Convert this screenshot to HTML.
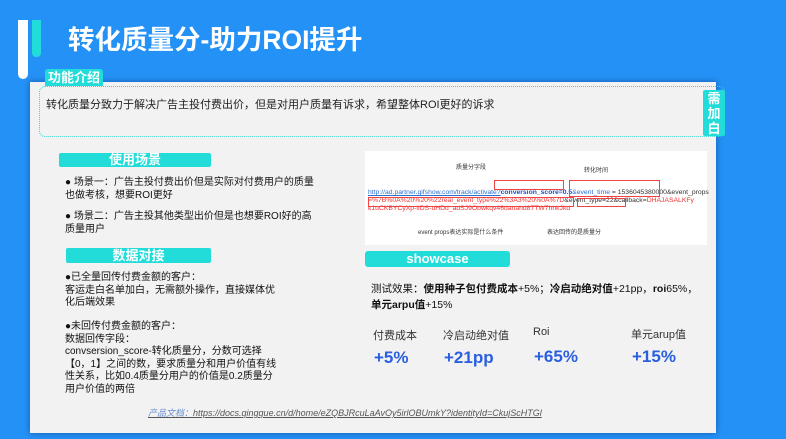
<!DOCTYPE html><html><head><meta charset="utf-8"><style>
*{margin:0;padding:0;box-sizing:border-box}
body{width:786px;height:439px;overflow:hidden;background:#2491f6;font-family:"Liberation Sans","Noto Sans CJK SC",sans-serif;position:relative}
.a{position:absolute}
.tab{position:absolute;background:#22dcd9;color:#fff;font-weight:bold;text-align:center;border-radius:2px}
.t{position:absolute;font-size:10px;color:#111;line-height:13px}
.r{position:absolute;border:1px solid #e44}
</style></head><body>
<div class="a" style="left:18px;top:20px;width:10px;height:59px;background:#fff;border-radius:0 0 5px 5px"></div>
<div class="a" style="left:32px;top:20px;width:9px;height:37px;background:#22dcd9;border-radius:0 0 4px 4px"></div>
<div class="a" style="left:68px;top:18px;font-size:26.5px;font-weight:bold;color:#fff">转化质量分-助力ROI提升</div>
<div class="a" style="left:30px;top:82px;width:686px;height:351px;background:#f2f2f2;box-shadow:0 0 6px rgba(0,0,60,.4)"></div>
<div class="a" style="left:39px;top:86px;width:686px;height:51px;border:1.5px dotted #2ad9d6;border-radius:6px"></div>
<div class="tab" style="left:45px;top:69px;width:58px;height:17px;font-size:13px;line-height:17px;border-radius:3px 3px 0 0">功能介绍</div>
<div class="t" style="left:46px;top:99px;font-size:11px;color:#222">转化质量分致力于解决广告主投付费出价，但是对用户质量有诉求，希望整体ROI更好的诉求</div>
<div class="tab" style="left:703px;top:90px;width:22px;height:46px;font-size:13px;line-height:15px;padding-top:1px">需<br>加<br>白</div>
<div class="tab" style="left:59px;top:153px;width:152px;height:14px;font-size:13px;line-height:14px">使用场景</div>
<div class="t" style="left:65px;top:176px">● 场景一：广告主投付费出价但是实际对付费用户的质量<br>也做考核，想要ROI更好</div>
<div class="t" style="left:65px;top:210px">● 场景二：广告主投其他类型出价但是也想要ROI好的高<br>质量用户</div>
<div class="tab" style="left:66px;top:248px;width:145px;height:15px;font-size:13px;line-height:15px">数据对接</div>
<div class="t" style="left:65px;top:272px;line-height:12.5px">●已全量回传付费金额的客户：<br>客运走白名单加白，无需额外操作，直接媒体优<br>化后端效果</div>
<div class="t" style="left:65px;top:321px;line-height:12.5px">●未回传付费金额的客户：<br>数据回传字段：<br>convsersion_score-转化质量分，分数可选择<br>【0，1】之间的数，要求质量分和用户价值有线<br>性关系，比如0.4质量分用户的价值是0.2质量分<br>用户价值的两倍</div>
<div class="a" style="left:148px;top:406px;font-size:9px;color:#555;font-style:italic;text-decoration:underline"><span style="color:#6a8fd0">产品文档：</span>https://docs.qingque.cn/d/home/eZQBJRcuLaAvOy5irlOBUmkY?identityId=CkujScHTGl</div>
<div class="a" style="left:365px;top:151px;width:342px;height:94px;background:#fff"></div>
<div class="a" style="left:456px;top:162px;font-size:6px;color:#333">质量分字段</div>
<div class="a" style="left:584px;top:165px;font-size:6px;color:#333">转化时间</div>
<div class="a" style="left:368px;top:189px;font-size:6.8px;color:#333;white-space:nowrap;line-height:8px"><span style="color:#2a6fd0;text-decoration:underline">http://ad.partner.gifshow.com/track/activate?</span><b style="color:#1a4fc0">conversion_score=0.5</b><span style="color:#2a6fd0">&amp;event_time</span> = 1536045380000&amp;event_props<br><span style="color:#e33">=%7B%0A%20%20%22real_event_type%22%3A3%20%0A%7D</span>&amp;event_type=22&amp;callback=<span style="color:#e33">DHAJASALKFy</span><br><span style="color:#e33">k1uCKBYCyXp-lIDS-uHDd_adSJ9Obwkqv46danahd87TW7hhkJkd</span></div>
<div class="r" style="left:494px;top:180px;width:70px;height:10px"></div>
<div class="r" style="left:569px;top:180px;width:91px;height:17px"></div>
<div class="r" style="left:368px;top:197px;width:206px;height:10px"></div>
<div class="r" style="left:577px;top:198px;width:49px;height:9px"></div>
<div class="a" style="left:418px;top:227px;font-size:6px;color:#333">event props表达实际是什么条件</div>
<div class="a" style="left:547px;top:227px;font-size:6px;color:#333">表达回传的是质量分</div>
<div class="tab" style="left:365px;top:251px;width:145px;height:16px;font-size:13px;line-height:16px;border-radius:3px">showcase</div>
<div class="t" style="left:371px;top:281px;font-size:10.5px;line-height:16px">测试效果：<b>使用种子包付费成本</b>+5%；<b>冷启动绝对值</b>+21pp，<b>roi</b>65%，<br><b>单元arpu值</b>+15%</div>
<div class="a" style="left:373px;top:327px;font-size:11px;color:#333">付费成本</div>
<div class="a" style="left:443px;top:327px;font-size:11px;color:#333">冷启动绝对值</div>
<div class="a" style="left:533px;top:326px;font-size:11px;color:#333">Roi</div>
<div class="a" style="left:631px;top:326px;font-size:11px;color:#333">单元arup值</div>
<div class="a" style="left:374px;top:348px;font-size:17px;font-weight:bold;color:#2a5fe0">+5%</div>
<div class="a" style="left:444px;top:348px;font-size:17px;font-weight:bold;color:#2a5fe0">+21pp</div>
<div class="a" style="left:534px;top:347px;font-size:17px;font-weight:bold;color:#2a5fe0">+65%</div>
<div class="a" style="left:632px;top:347px;font-size:17px;font-weight:bold;color:#2a5fe0">+15%</div>
</body></html>
